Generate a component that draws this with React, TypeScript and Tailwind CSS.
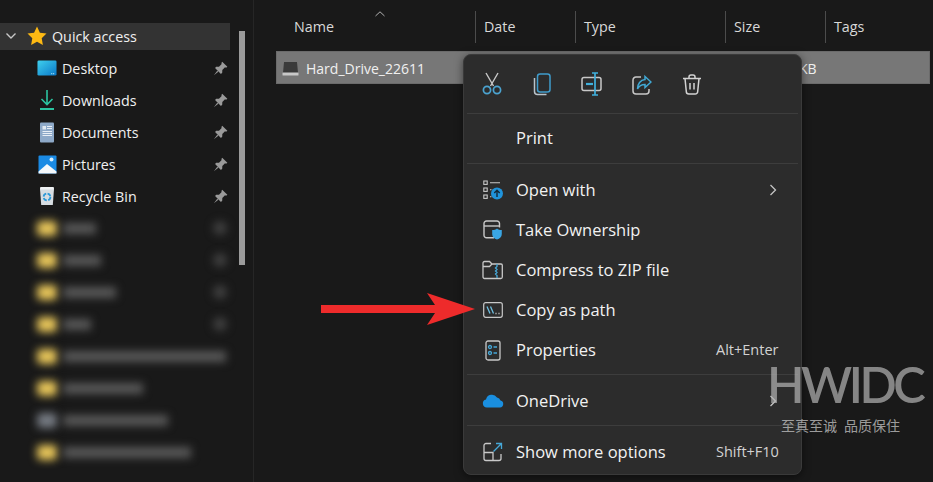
import React from "react";

const Pin = () => (
  <svg width="15" height="15" viewBox="0 0 14 14" fill="#9a9a9a">
    <path d="M8.6 0.6 13.4 5.400 12.200 6.200 11.200 5.900 8.700 8.400 8.600 11 7.400 12.100 1.900 6.600 3 5.400 5.600 5.300 8.100 2.800 7.800 1.800Z" />
    <path d="M4 9 .8 13.200 5 10Z" />
  </svg>
);

const Star = () => (
  <svg width="20" height="20" viewBox="0 0 20 20">
    <path d="M10 .6 12.900 6.700 19.500 7.600 14.700 12.200 15.900 18.900 10 15.700 4.100 18.900 5.300 12.200.5 7.600 7.100 6.700Z" fill="#fdb913" />
  </svg>
);

const Desktop = () => (
  <svg width="21" height="18" viewBox="0 0 21 18">
    <defs>
      <linearGradient id="dg" x1="0" y1="0" x2="1" y2="1">
        <stop offset="0" stopColor="#3fd0ee" />
        <stop offset="1" stopColor="#0a78c8" />
      </linearGradient>
    </defs>
    <rect x="0.500" y="1" width="20" height="16" rx="1.500" fill="url(#dg)" />
    <rect x="15" y="14.500" width="1" height="1" fill="#dff" />
    <rect x="17" y="14.500" width="1" height="1" fill="#dff" />
  </svg>
);

const Download = () => (
  <svg width="18" height="22" viewBox="0 0 18 22" fill="none" stroke="#2bc4a0" strokeWidth="1.6">
    <path d="M9 1v14M3.500 10 9 15.500 14.500 10" />
    <path d="M2 20h14" strokeWidth="2" />
  </svg>
);

const Doc = () => (
  <svg width="16" height="21" viewBox="0 0 16 21">
    <rect x="1" y="0.500" width="14" height="20" rx="1" fill="#8ea9c8" />
    <path d="M8 4.500h5M8 6.500h5M3.500 9.500h9.500M3.500 11.500h9.500M3.500 13.500h9.500" stroke="#e8eef5" strokeWidth="1" />
    <rect x="3.500" y="4" width="3.500" height="3.500" fill="#dfe7f0" />
  </svg>
);

const Picture = () => (
  <svg width="19" height="19" viewBox="0 0 19 19">
    <rect x="0.500" y="0.500" width="18" height="18" rx="1" fill="#1a8ae4" />
    <circle cx="13.500" cy="4.500" r="2" fill="#d6efff" />
    <path d="M0.500 16.500 9 9 18.500 16.500V18.500H0.500Z" fill="#f4f8fb" />
  </svg>
);

const Recycle = () => (
  <svg width="16" height="20" viewBox="0 0 16 20">
    <path d="M1 3h14l-1.200 16H2.200Z" fill="#d7dde2" />
    <rect x="1" y="1" width="14" height="2.500" rx="1" fill="#eef1f3" />
    <circle cx="8" cy="11" r="3.400" fill="none" stroke="#2f9ad8" strokeWidth="1.8" strokeDasharray="4 1.4" />
  </svg>
);

const Scissors = () => (
  <svg width="20" height="24" viewBox="0 0 20 24" fill="none" strokeWidth="1.4">
    <path d="M4 1 11.500 14M16 1 8.500 14" stroke="#c8c8c8" />
    <circle cx="5" cy="18" r="3.600" stroke="#4ba3d0" strokeWidth="1.7" />
    <circle cx="15" cy="18" r="3.600" stroke="#4ba3d0" strokeWidth="1.7" />
  </svg>
);

const CopyIcon = () => (
  <svg width="18" height="23" viewBox="0 0 18 23" fill="none" stroke="#3f9ccc" strokeWidth="1.5">
    <rect x="4.500" y="1" width="12.500" height="18" rx="2.500" />
    <path d="M1.500 5v13.500a3 3 0 0 0 3 3h9" stroke="#b9c4cb" />
  </svg>
);

const Rename = () => (
  <svg width="22" height="24" viewBox="0 0 22 24" fill="none" strokeWidth="1.5">
    <rect x="1" y="5.500" width="19" height="13" rx="2" stroke="#c8c8c8" />
    <path d="M5 12h7" stroke="#40b0dc" strokeWidth="2.2" />
    <path d="M14 1v22M11 1h6M11 23h6" stroke="#40b0dc" strokeWidth="1.7" />
  </svg>
);

const Share = () => (
  <svg width="20" height="21" viewBox="0 0 20 21" fill="none" strokeWidth="1.5">
    <path d="M9 3H4a3 3 0 0 0-3 3v11a3 3 0 0 0 3 3h10a3 3 0 0 0 3-3v-2" stroke="#c8c8c8" />
    <path d="M13 2.500 19 8l-6 5.500V10.500C9.500 10.500 7 12 5.500 15 5.500 10 8.500 6 13 5.500Z" stroke="#40a8d4" />
  </svg>
);

const Trash = () => (
  <svg width="18" height="21" viewBox="0 0 18 21" fill="none" stroke="#d2d2d2" strokeWidth="1.5">
    <path d="M0 4.500h18M6 4.500V3a2 2 0 0 1 2-2h2a2 2 0 0 1 2 2v1.500" />
    <path d="M2 4.500 3.300 17.500a2.500 2.500 0 0 0 2.500 2.500h6.400a2.500 2.500 0 0 0 2.500-2.500L16 4.500" />
    <path d="M7 9v6.500M11 9v6.500" />
  </svg>
);

const OpenWith = () => (
  <svg width="20" height="20" viewBox="0 0 20 20" fill="none" stroke="#c8c8c8" strokeWidth="1.1">
    <rect x="0.800" y="1" width="3.400" height="3.400" />
    <rect x="0.800" y="8" width="3.400" height="3.400" />
    <rect x="0.800" y="15" width="3.400" height="3.400" />
    <path d="M7 2.700h10M7 9.700h1.500M7 16.700h1.500" />
    <circle cx="14" cy="13.500" r="6" fill="#2094dc" stroke="none" />
    <path d="M14 17v-6.500M11.300 13 14 10.300 16.700 13" stroke="#12293a" strokeWidth="1.400" />
  </svg>
);

const Ownership = () => (
  <svg width="20" height="20" viewBox="0 0 20 20" fill="none" stroke="#c8c8c8" strokeWidth="1.4">
    <path d="M11 17.700H3.500a2.500 2.500 0 0 1-2.500-2.500V3.500A2.500 2.500 0 0 1 3.500 1h10.500a2.500 2.500 0 0 1 2.500 2.500v4" />
    <path d="M1 6h15.500" />
    <path d="M14 8.500c1.200 1 2.700 1.500 4.800 1.500v4c0 2.800-2 4.600-4.800 5.500-2.800-.9-4.800-2.700-4.800-5.500v-4c2.100 0 3.600-.5 4.800-1.500Z" fill="#3aa6e4" stroke="none" />
  </svg>
);

const Zip = () => (
  <svg width="21" height="20" viewBox="0 0 21 20" fill="none" stroke="#c8c8c8" strokeWidth="1.3">
    <path d="M1 3a1.500 1.500 0 0 1 1.500-1.500h5L10 4h9a1.300 1.300 0 0 1 1.300 1.300V17a1.500 1.500 0 0 1-1.500 1.500H2.500A1.500 1.500 0 0 1 1 17Z" />
    <path d="M1 6.500h6.500L10 4" />
    <path d="M15 4v2.500l-1.500 1.500 1.500 1.500-1.500 1.500 1.500 1.500-1.500 1.500 1.500 1.500v2.500" stroke="#46a8d8" />
  </svg>
);

const PathIcon = () => (
  <svg width="20" height="16" viewBox="0 0 20 16" fill="none" stroke="#c8c8c8" strokeWidth="1.2">
    <rect x="0.700" y="0.700" width="18.600" height="14.600" rx="2" />
    <path d="M4 4.500 7 11.500M7.500 4.500 10.500 11.500" stroke="#6fbfe0" strokeWidth="1.300" />
    <path d="M12.500 11.500h1M15.500 11.500h1" stroke="#dcdcdc" strokeWidth="1.300" />
  </svg>
);

const Props = () => (
  <svg width="16" height="21" viewBox="0 0 16 21" fill="none" stroke="#c8c8c8" strokeWidth="1.3">
    <rect x="1" y="1" width="14" height="19" rx="2" />
    <circle cx="5" cy="7" r="1.500" stroke="#46a8d8" />
    <circle cx="5" cy="13" r="1.500" stroke="#46a8d8" />
    <path d="M8.500 7H12M8.500 13H12" stroke="#46a8d8" />
  </svg>
);

const Cloud = () => (
  <svg width="22" height="14" viewBox="0 0 22 14">
    <path d="M5 13.500a4 4 0 0 1-1-7.900 6 6 0 0 1 11-2 4.500 4.500 0 0 1 3.500 3A3.500 3.500 0 0 1 18 13.500Z" fill="#1a8fe0" />
  </svg>
);

const MoreOpts = () => (
  <svg width="20" height="20" viewBox="0 0 20 20" fill="none" stroke="#c8c8c8" strokeWidth="1.3">
    <path d="M8 1.500H3A2 2 0 0 0 1 3.500v13a2 2 0 0 0 2 2h13a2 2 0 0 0 2-2V12" />
    <path d="M1 10.500h9v8" />
    <path d="M10.500 9.500 18.500 1.500M13 1.500h5.500V7" stroke="#46a8d8" />
  </svg>
);

const Chevron = () => (
  <div className="flex justify-end pr-[4px]">
    <svg width="8" height="12" viewBox="0 0 8 12" fill="none" stroke="#c4c4c4" strokeWidth="1.3">
      <path d="M1.500 1 6.500 6l-5 5" />
    </svg>
  </div>
);

const pinned = [
  { name: "Desktop", icon: <Desktop /> },
  { name: "Downloads", icon: <Download /> },
  { name: "Documents", icon: <Doc /> },
  { name: "Pictures", icon: <Picture /> },
  { name: "Recycle Bin", icon: <Recycle /> },
];

const blurred = [
  { w: "w-[33px]", pin: true, gray: false },
  { w: "w-[38px]", pin: true, gray: false },
  { w: "w-[53px]", pin: true, gray: false },
  { w: "w-[28px]", pin: true, gray: false },
  { w: "w-[163px]", pin: false, gray: false },
  { w: "w-[80px]", pin: false, gray: false },
  { w: "w-[105px]", pin: false, gray: true },
  { w: "w-[128px]", pin: false, gray: false },
];

const columns = [
  { name: "Date", w: "w-[100px]" },
  { name: "Type", w: "w-[150px]" },
  { name: "Size", w: "w-[100px]" },
  { name: "Tags", w: "w-[100px]" },
];

function MenuRow({ icon, label, right }: { icon: React.ReactNode; label: string; right?: React.ReactNode }) {
  return (
    <div className="flex h-10 items-center pr-[20px]">
      <div className="flex w-[52px] shrink-0 justify-center pl-[5px]">{icon}</div>
      <span className="text-[16.5px] text-[#f2f2f2]">{label}</span>
      <div className="ml-auto w-[65px] text-[14.5px] text-[#d2d2d2]">{right}</div>
    </div>
  );
}

export default function App() {
  return (
    <div
      className="relative flex h-[482px] w-[933px] overflow-hidden bg-[#191919]"
      style={{ fontFamily: '"Open Sans", "Noto Sans", "Noto Sans CJK SC", sans-serif' }}
    >
      <aside className="w-[254px] shrink-0 border-r border-[#262626] pt-[20px]">
        <div className="flex h-8 w-[230px] items-center">
          <div className="flex h-[27px] w-full items-center bg-[#333333]">
            <svg className="ml-[6px]" width="10" height="6" viewBox="0 0 10 6" fill="none" stroke="#c8c8c8" strokeWidth="1.400">
              <path d="M.5.500 5 5 9.500.500" />
            </svg>
            <div className="ml-[11px] flex w-5 justify-center">
              <Star />
            </div>
            <span className="ml-[5px] pt-[2px] text-[14.3px] text-[#f0f0f0]">Quick access</span>
          </div>
        </div>
        {pinned.map((p) => (
          <div key={p.name} className="flex h-8 w-[230px] items-center pl-[37px]">
            <div className="flex w-5 justify-center">{p.icon}</div>
            <span className="ml-[5px] pt-[2px] text-[14.3px] text-[#f0f0f0]">{p.name}</span>
            <div className="ml-auto flex w-5 justify-center">
              <Pin />
            </div>
          </div>
        ))}
        {blurred.map((b, i) => (
          <div key={i} className="flex h-8 w-[230px] items-center pl-[37px]">
            <div className={`h-[15px] w-5 rounded-sm blur-[4px] ${b.gray ? "bg-[#757a82]" : "bg-[#e8c65a]"}`} />
            <div className={`ml-[6px] h-[11px] shrink-0 bg-[#585858] blur-[4px] ${b.w}`} />
            {b.pin && <div className="ml-auto mr-[3px] h-[14px] w-[14px] rounded-full bg-[#404040] blur-[4px]" />}
          </div>
        ))}
      </aside>

      <div className="absolute left-[239px] top-[31px] h-[234px] w-[6px] bg-[#9b9b9b]" />

      <main className="flex-1 pl-[22px] pt-[10px]">
        <div className="flex h-8 items-center pt-[2px] text-[14.3px] text-[#d8d8d8]">
          <div className="relative flex h-8 w-[199px] items-center pl-[18px]">
            Name
            <svg className="absolute left-[99px] top-0" width="10" height="6" viewBox="0 0 10 6" fill="none" stroke="#b0b0b0" strokeWidth="1">
              <path d="M.5 5 5 .8 9.500 5" />
            </svg>
          </div>
          {columns.map((c) => (
            <div key={c.name} className={`flex h-8 items-center border-l border-[#4c4c4c] pl-[8px] ${c.w}`}>
              {c.name}
            </div>
          ))}
        </div>
        <div className="mt-[9px] flex h-[33px] w-[654px] items-center border border-[#6b6b6b] bg-[#777777] pt-[1px] text-[14px] text-[#f0f0f0]">
          <div className="flex w-[198px] items-center pl-[5px]">
            <svg width="17" height="15" viewBox="0 0 17 15">
              <path d="M2 1h13l1 11H1Z" fill="#3a3a3a" />
              <rect x="0.500" y="11.500" width="16" height="3" rx="0.500" fill="#c8c8c8" />
            </svg>
            <span className="ml-[7px]">Hard_Drive_22611</span>
          </div>
          <span className="ml-[324px]">KB</span>
        </div>
      </main>

      <div className="absolute left-[463px] top-[54px] h-[421px] w-[339px] rounded-lg border border-[#3a3a3a] bg-[#2c2c2c] shadow-[0_2px_8px_rgba(0,0,0,0.5)]">
        <div className="mx-[3px] flex h-[59px] items-center border-b border-[#3d3d3d]">
          {[<Scissors key="a" />, <CopyIcon key="b" />, <Rename key="c" />, <Share key="d" />, <Trash key="e" />].map((ic, i) => (
            <div key={i} className="flex w-[50px] justify-center">
              {ic}
            </div>
          ))}
        </div>
        <div className="mx-[3px] flex h-[50px] items-center border-b border-[#3d3d3d] pl-[49px] text-[16.5px] text-[#f2f2f2]">Print</div>
        <div className="mx-[3px] border-b border-[#3d3d3d] pb-[4px] pt-[6px]">
          <div className="-mx-[3px]">
            <MenuRow icon={<OpenWith />} label="Open with" right={<Chevron />} />
            <MenuRow icon={<Ownership />} label="Take Ownership" />
            <MenuRow icon={<Zip />} label="Compress to ZIP file" />
            <MenuRow icon={<PathIcon />} label="Copy as path" />
            <MenuRow icon={<Props />} label="Properties" right="Alt+Enter" />
          </div>
        </div>
        <div className="mx-[3px] border-b border-[#3d3d3d] pb-[4px] pt-[6px]">
          <div className="-mx-[3px]">
            <MenuRow icon={<Cloud />} label="OneDrive" right={<Chevron />} />
          </div>
        </div>
        <div className="pt-[6px]">
          <MenuRow icon={<MoreOpts />} label="Show more options" right="Shift+F10" />
        </div>
      </div>

      <svg className="absolute left-[321px] top-[293px]" width="154" height="32" viewBox="0 0 154 32">
        <path d="M0 12H114L106 0 154 16 106 32 114 20H0Z" fill="#ee2b2b" />
      </svg>

      <div className="absolute left-[767px] top-[355px] flex flex-col items-start text-[#b4b4b4]/70">
        <div className="text-[49px] font-semibold leading-[58px] tracking-[-3.5px]" style={{ fontFamily: '"Lato", sans-serif' }}>
          HWIDC
        </div>
        <div className="ml-[14px] mt-[2px] flex gap-[7px] text-[14px] leading-5 text-[#c0c0c0]/80" style={{ fontFamily: '"Noto Sans CJK SC", sans-serif' }}>
          <span>至真至诚</span>
          <span>品质保住</span>
        </div>
      </div>
    </div>
  );
}
